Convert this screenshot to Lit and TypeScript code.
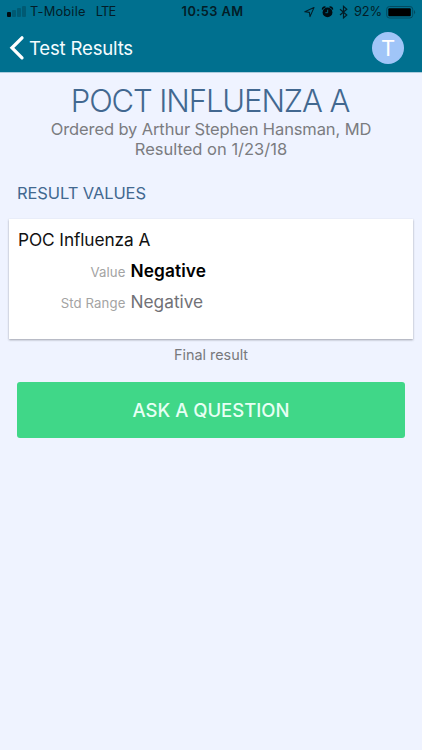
import { LitElement, html, css } from "lit";
import { customElement } from "lit/decorators.js";

@customElement("status-bar")
class StatusBar extends LitElement {
  static styles = css`
    :host { display: flex; position: relative; height: 24px; box-sizing: border-box; padding: 0 6px 0 7px; align-items: center; justify-content: space-between; color: #031d27; font-size: 12.8px; line-height: 24px; white-space: nowrap; }
    .side { display: flex; align-items: center; height: 24px; }
    .signal { width: 19px; height: 12px; margin-right: 4px; }
    .carrier { letter-spacing: 0.22px; }
    .net { margin-left: 10px; letter-spacing: -0.7px; }
    .time { position: absolute; left: 3px; right: 0; text-align: center; font-weight: 600; letter-spacing: 0.42px; }
    .icons { width: 47px; height: 14px; margin-right: 4px; }
    .pct { letter-spacing: -0.1px; margin-right: 4px; }
    .battery { width: 30px; height: 14px; }
    svg { display: block; }
  `;
  render() {
    return html`
      <div class="side">
        <svg class="signal" viewBox="0 0 19 12">
          <rect x="0" y="6" width="4" height="5" rx="1" fill="#000c12" />
          <rect x="5" y="4" width="4" height="7" rx="1" fill="#005a73" />
          <rect x="10" y="2" width="4" height="9" rx="1" fill="#005a73" />
          <rect x="15" y="0" width="4" height="11" rx="1" fill="#005a73" />
        </svg>
        <span class="carrier">T-Mobile</span><span class="net">LTE</span>
      </div>
      <div class="time">10:53 AM</div>
      <div class="side">
        <svg class="icons" viewBox="0 0 47 14">
          <path d="M1.8 6.8 L11 2.6 L7 11.6 L6.4 7.4 Z" fill="none" stroke="#031d27" stroke-width="1.1" stroke-linejoin="round" />
          <circle cx="24.5" cy="7.4" r="4.9" fill="#000c12" />
          <path d="M19.6 4.7 A2.3 2.3 0 0 1 22.4 2.1 M26.6 2.1 A2.3 2.3 0 0 1 29.4 4.7" fill="none" stroke="#000c12" stroke-width="1.6" />
          <path d="M24.7 4.7 V7.7 H22.4" fill="none" stroke="#00708f" stroke-width="0.9" />
          <path d="M37 4.3 L43.8 10 L40.5 12.9 V1.4 L43.8 4.3 L37 10" fill="none" stroke="#031d27" stroke-width="1.2" />
        </svg>
        <span class="pct">92%</span>
        <svg class="battery" viewBox="0 0 30 14">
          <rect x="0.7" y="1.5" width="26" height="11.5" rx="2.8" fill="none" stroke="#024a60" stroke-width="1" />
          <rect x="2.3" y="3.2" width="22.5" height="8.1" rx="1" fill="#000" />
          <path d="M28 5 Q30.2 7.2 28 9.4 Z" fill="#024a60" />
        </svg>
      </div>
    `;
  }
}

@customElement("nav-bar")
class NavBar extends LitElement {
  static styles = css`
    :host { display: flex; height: 48px; box-sizing: border-box; padding: 0 18px 0 9px; align-items: center; color: #fff; }
    .chevron { display: block; width: 16px; height: 26px; }
    .title { margin-left: 4px; font-size: 18.6px; line-height: 24px; letter-spacing: -0.2px; flex: 1; color: #f4fcff; }
    .avatar { width: 32px; height: 32px; border-radius: 50%; background: #a0c5f8; font-size: 22px; line-height: 32px; text-align: center; }
  `;
  render() {
    return html`
      <svg class="chevron" viewBox="0 0 16 26"><path d="M13 2.8 L3 12.8 L13 22.8" fill="none" stroke="#fff" stroke-width="3.3" stroke-linecap="round" /></svg>
      <div class="title">Test Results</div>
      <div class="avatar">T</div>
    `;
  }
}

@customElement("result-card")
class ResultCard extends LitElement {
  static styles = css`
    :host { display: block; box-sizing: border-box; height: 120px; margin: 0 9px; padding: 10px 9px 0; background: #fff; box-shadow: 0 1px 2px rgba(60, 64, 72, 0.45); }
    .name { font-size: 17.3px; line-height: 22px; letter-spacing: -0.1px; color: #111; }
    .rows { display: grid; grid-template-columns: 107.5px 1fr; column-gap: 5px; grid-auto-rows: 31px; align-items: baseline; padding-top: 4px; line-height: 31px; }
    .label { text-align: right; font-size: 13.2px; letter-spacing: 0.1px; color: #a3a3a3; }
    .value { font-size: 17.3px; color: #000; font-weight: 600; letter-spacing: 0.1px; }
    .range { font-size: 17.3px; color: #717176; }
  `;
  render() {
    return html`
      <div class="name">POC Influenza A</div>
      <div class="rows">
        <span class="label">Value</span><span class="value">Negative</span>
        <span class="label">Std Range</span><span class="range">Negative</span>
      </div>
    `;
  }
}

@customElement("app-root")
class AppRoot extends LitElement {
  static styles = css`
    :host { display: block; width: 422px; height: 750px; overflow: hidden; background: #eff3ff; font-family: Inter, "Liberation Sans", sans-serif; }
    header { height: 72px; background: #00708f; box-shadow: 0 0.5px 0 #6da5bb; }
    h1 { margin: 10px 2px 0 0; height: 37px; line-height: 37px; font-size: 31px; font-weight: 350; text-align: center; letter-spacing: -1.1px; color: #426890; }
    .meta { text-align: center; font-size: 16.5px; line-height: 20px; color: #7b7c80; }
    .orderer { letter-spacing: -0.12px; }
    h2 { margin: 24px 0 16px 17px; font-size: 16.5px; line-height: 20px; font-weight: 400; letter-spacing: -0.1px; color: #426890; }
    .status { margin-top: 6px; text-align: center; font-size: 14.4px; line-height: 20px; color: #78797c; }
    button { display: block; width: 388px; height: 56px; margin: 17px 0 0 17px; padding: 1px 0 0; border: 0; border-radius: 3px; background: #40d788; color: #e7fff4; font: 500 18.5px/55px Inter, "Liberation Sans", sans-serif; text-align: center; }
  `;
  render() {
    return html`
      <header><status-bar></status-bar><nav-bar></nav-bar></header>
      <h1>POCT INFLUENZA A</h1>
      <div class="meta orderer">Ordered by Arthur Stephen Hansman, MD</div>
      <div class="meta">Resulted on 1/23/18</div>
      <h2>RESULT VALUES</h2>
      <result-card></result-card>
      <div class="status">Final result</div>
      <button>ASK A QUESTION</button>
    `;
  }
}
